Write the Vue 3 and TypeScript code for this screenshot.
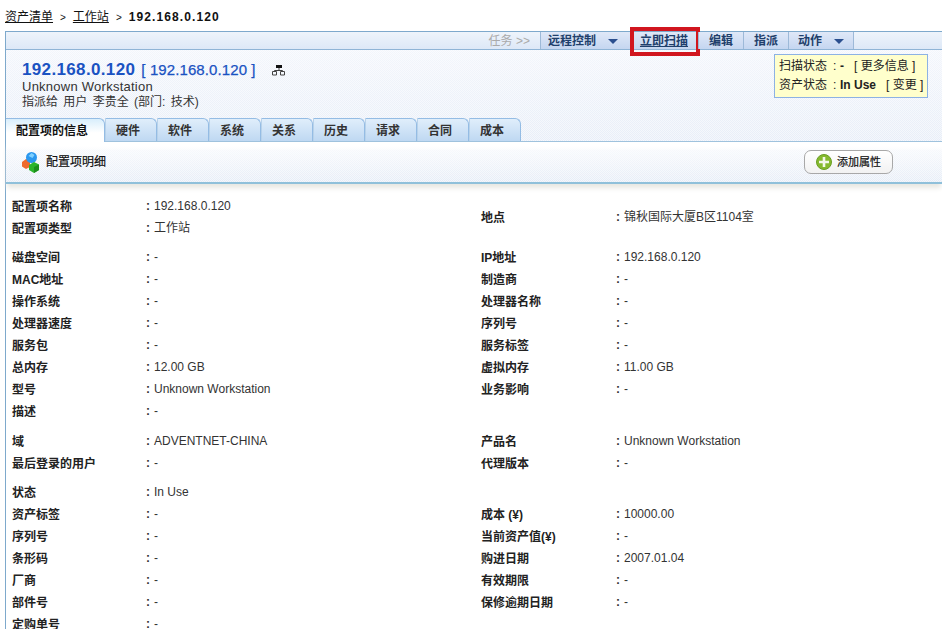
<script setup lang="ts">
type Cell = { label: string; value: string };
type Row = { left?: Cell; right?: Cell };
const tabs = ['硬件', '软件', '系统', '关系', '历史', '请求', '合同', '成本'];
const g = (label: string, value = '-'): Cell => ({ label, value });
const groups: Row[][] = [
  [
    { left: g('磁盘空间'), right: g('IP地址', '192.168.0.120') },
    { left: g('MAC地址'), right: g('制造商') },
    { left: g('操作系统'), right: g('处理器名称') },
    { left: g('处理器速度'), right: g('序列号') },
    { left: g('服务包'), right: g('服务标签') },
    { left: g('总内存', '12.00 GB'), right: g('虚拟内存', '11.00 GB') },
    { left: g('型号', 'Unknown Workstation'), right: g('业务影响') },
    { left: g('描述') },
  ],
  [
    { left: g('域', 'ADVENTNET-CHINA'), right: g('产品名', 'Unknown Workstation') },
    { left: g('最后登录的用户'), right: g('代理版本') },
  ],
  [
    { left: g('状态', 'In Use') },
    { left: g('资产标签'), right: g('成本 (¥)', '10000.00') },
    { left: g('序列号'), right: g('当前资产值(¥)') },
    { left: g('条形码'), right: g('购进日期', '2007.01.04') },
    { left: g('厂商'), right: g('有效期限') },
    { left: g('部件号'), right: g('保修逾期日期') },
    { left: g('定购单号') },
  ],
];
</script>

<template>
  <div class="page">
    <nav class="crumb">
      <a>资产清单</a><span class="sep">&gt;</span><a>工作站</a><span class="sep">&gt;</span><b>192.168.0.120</b>
    </nav>

    <section class="panel">
      <div class="toolbar">
        <span class="tool muted">任务 &gt;&gt;</span>
        <span class="tool menu">远程控制<i class="tri"></i></span>
        <span class="tool scan">立即扫描</span>
        <span class="tool">编辑</span>
        <span class="tool">指派</span>
        <span class="tool menu last">动作<i class="tri"></i></span>
      </div>

      <header class="head">
        <div class="head-top">
          <div class="info">
            <h1>192.168.0.120 <span>[ 192.168.0.120 ]</span>
              <svg class="tree" width="14" height="11" viewBox="0 0 14 11">
                <path d="M4 0h6v3H4z" fill="#111"/>
                <path d="M7 3v3M2.500 5.500h8M2.500 5.500v1M10.500 5.500v1M.5 6.500h4v3.500h-4zM8.500 6.500h4v3.500h-4z" fill="none" stroke="#444" stroke-width="1"/>
              </svg>
            </h1>
            <p class="sub">Unknown Workstation</p>
            <p class="assign">指派给 用户 李贵全 (部门: 技术)</p>
          </div>
          <div class="status">
            <div class="st-row"><span class="st-l">扫描状态</span><span class="st-c">:</span><b class="st-v">-</b><a class="st-a">[ 更多信息 ]</a></div>
            <div class="st-row"><span class="st-l">资产状态</span><span class="st-c">:</span><b class="st-v">In Use</b><a class="st-a">[ 变更 ]</a></div>
          </div>
        </div>
        <div class="tabs">
          <span class="tab active">配置项的信息</span>
          <span v-for="t in tabs" :key="t" class="tab">{{ t }}</span>
        </div>
      </header>

      <div class="section">
        <div class="sec-title">
          <svg width="19" height="22" viewBox="0 0 19 22">
            <path d="M1 11l4-3 4 1v7l-4 2-4-2.500z" fill="#ee6a2c"/>
            <circle cx="10.500" cy="6.500" r="5.500" fill="#2b97ee"/>
            <path d="M7.500 5l3-3 3 2-2 3z" fill="#7fd0ff"/>
            <path d="M8 14l5-3 5 2.500V19l-5 3-5-3z" fill="#2cb52c"/>
            <path d="M13 16l5-2.500V19l-5 3z" fill="#1c8f1c"/>
          </svg>
          <b>配置项明细</b>
        </div>
        <button class="add">
          <svg width="16" height="16" viewBox="0 0 16 16">
            <circle cx="8" cy="8" r="7.500" fill="#86ba2f" stroke="#6b9f24"/>
            <path d="M8 3v10M3 8h10" stroke="#f4f8ea" stroke-width="2.600"/>
          </svg>
          添加属性
        </button>
      </div>

      <div class="details">
        <div class="grid first">
          <span class="lab">配置项名称</span><span class="val"><b>:</b>192.168.0.120</span>
          <span class="lab loc">地点</span><span class="val loc"><b>:</b>锦秋国际大厦B区1104室</span>
          <span class="lab">配置项类型</span><span class="val"><b>:</b>工作站</span>
        </div>
        <div v-for="(rows, i) in groups" :key="i" class="grid">
          <template v-for="(r, j) in rows" :key="j">
            <span class="lab">{{ r.left?.label }}</span>
            <span class="val"><b>:</b>{{ r.left?.value }}</span>
            <span class="lab">{{ r.right?.label }}</span>
            <span class="val"><template v-if="r.right"><b>:</b>{{ r.right.value }}</template></span>
          </template>
        </div>
      </div>
    </section>
  </div>
</template>

<style>
html, body { margin: 0; overflow: hidden; background: #fff; }
</style>

<style scoped>
.page {
  height: 629px;
  overflow: hidden;
  font: 12px/14px "Liberation Sans", "Noto Sans CJK SC", sans-serif;
  color: #222;
  background: #fff;
}
.crumb {
  height: 31px;
  box-sizing: border-box;
  padding: 10px 0 0 5px;
  color: #111;
}
.crumb a { text-decoration: underline; }
.crumb .sep { margin: 0 7px; font-size: 10px; }
.crumb b { font-weight: 700; font-size: 12px; letter-spacing: 1.100px; }
.panel {
  margin-left: 5px;
  border-left: 1px solid #7ea9cc;
}
.toolbar {
  height: 17px;
  border-top: 1px solid #7ea9cc;
  border-bottom: 1px solid #8fb4d6;
  background: linear-gradient(#eef4fb, #dde8f7);
  display: flex;
  justify-content: flex-end;
  padding-right: 88px;
  line-height: 19px;
  color: #1f3f6b;
}
.tool {
  padding: 0 10px;
  border-left: 1px solid #9db9d8;
  background: linear-gradient(#dfe8f8, #c5d6f0);
  font-weight: 700;
  position: relative;
}
.muted {
  border: 0;
  background: none;
  color: #aaa;
  font-weight: 400;
  padding: 0 10px 0 0;
}
.menu { padding: 0 0 0 7px; width: 90px; box-sizing: border-box; }
.menu.last { width: 66px; padding-left: 9px; border-right: 1px solid #9db9d8; }
.tri {
  display: inline-block;
  margin-left: 12px;
  vertical-align: 1px;
  border-style: solid;
  border-width: 5px 5px 0;
  border-color: #2a4f8f transparent transparent;
}
.scan {
  width: 68px;
  box-sizing: border-box;
  text-align: center;
  padding: 0;
  border-left: 0;
  text-decoration: underline;
}
.scan::after {
  content: "";
  position: absolute;
  left: 0;
  right: -2px;
  top: -5px;
  bottom: -7px;
  border: 4px solid #d1161f;
}
.head {
  background:
    repeating-conic-gradient(rgba(255, 255, 255, .55) 0 25%, transparent 0 50%) 0 0 / 2px 2px,
    linear-gradient(#f3f6fc, #e8eef8);
}
.head-top {
  height: 68px;
  display: flex;
  justify-content: space-between;
  padding: 0 14px 0 16px;
}
.info { padding-top: 11px; }
h1 {
  margin: 0;
  font-size: 17px;
  line-height: 17px;
  font-weight: 700;
  letter-spacing: .35px;
  color: #1a52c2;
  white-space: nowrap;
}
h1 span { font-size: 15px; font-weight: 400; letter-spacing: .1px; margin-left: 1px; -webkit-text-stroke: .25px #1a52c2; }
.tree { margin-left: 16px; vertical-align: -1px; }
.sub, .assign { margin: 0; line-height: 15px; color: #333; }
.sub { font-size: 13px; letter-spacing: .25px; margin-top: 1px; }
.assign { margin-top: 1px; word-spacing: 2px; }
.status {
  margin-top: 4px;
  width: 148px;
  height: 42px;
  border: 1px solid #8db2e4;
  background: #ffffcc;
  padding: 0 0 0 4px;
}
.st-row { display: flex; height: 19px; line-height: 19px; margin-top: 2px; white-space: nowrap; color: #222; }
.st-row + .st-row { margin-top: 0; }
.st-l { width: 54px; }
.st-c { width: 7px; }
.st-v { width: 14px; }
.st-row + .st-row .st-v { width: 46px; }
.tabs {
  height: 23px;
  display: flex;
  align-items: flex-end;
  border-bottom: 1px solid #9fc2dd;
}
.tab {
  width: 52px;
  height: 23px;
  box-sizing: border-box;
  padding-left: 10px;
  line-height: 24px;
  font-weight: 700;
  color: #333;
  border: 1px solid #94bce4;
  border-bottom: 0;
  border-left-color: #b8d2ea;
  border-radius: 0 6px 0 0;
  background: linear-gradient(#e0eefb, #bfd8f2);
}
.tab.active {
  width: 99px;
  height: 24px;
  margin-bottom: -1px;
  color: #111;
  background: linear-gradient(#d8eefc, #fff 60%);
  border-left: 0;
}
.section {
  height: 40px;
  padding: 0 49px 0 15px;
  display: flex;
  align-items: center;
  justify-content: space-between;
  background:
    linear-gradient(#fff 4px, transparent 9px),
    repeating-conic-gradient(rgba(255, 255, 255, .55) 0 25%, transparent 0 50%) 0 0 / 2px 2px,
    linear-gradient(#fbfcfe, #e6edf7);
  border-bottom: 2px solid #8fc0da;
  box-shadow: 0 5px 5px -1px #e7e7e2;
}
.sec-title { display: flex; align-items: center; gap: 6px; color: #111; }
.sec-title b { font-weight: 400; -webkit-text-stroke: .2px #111; }
.add {
  width: 89px;
  height: 24px;
  padding: 0 0 0 11px;
  display: flex;
  align-items: center;
  gap: 5px;
  border: 1px solid #a8a8a8;
  border-radius: 7px;
  background: linear-gradient(#fff, #f2f2f2);
  font: inherit;
  font-size: 11px;
  color: #111;
  -webkit-text-stroke: .2px #111;
}
.details { padding: 12px 0 0 6px; }
.grid {
  display: grid;
  grid-template-columns: 134px 335px 135px 1fr;
  grid-auto-rows: 22px;
  margin-bottom: 7px;
  align-items: center;
}
.grid:nth-child(2) { margin-bottom: 8px; }
.grid.first { grid-template-rows: 22px 22px; }
.lab { font-weight: 700; color: #222; white-space: nowrap; }
.val { color: #333; white-space: nowrap; padding-bottom: 2px; }
.val b { display: inline-block; width: 8px; font-weight: 700; }
.loc { grid-row: span 2; }
</style>
